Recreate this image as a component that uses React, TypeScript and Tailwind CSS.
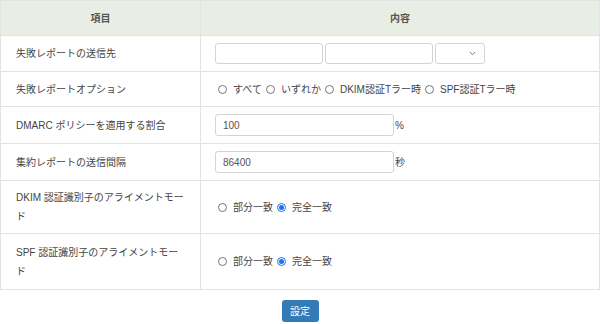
import * as React from "react"

function Radio({ checked }: { checked?: boolean }) {
  return checked ? (
    <span className="inline-flex h-[9px] w-[9px] shrink-0 items-center justify-center rounded-full border border-[#1a73e8] bg-white">
      <span className="h-[5px] w-[5px] rounded-full bg-[#1a73e8]" />
    </span>
  ) : (
    <span className="inline-block h-[9px] w-[9px] shrink-0 rounded-full border border-[#767676] bg-white" />
  )
}

function RadioGroup({ items, selected }: { items: string[]; selected?: number }) {
  return (
    <div className="flex items-center">
      {items.map((label, i) => (
        <label key={label} className="ml-[3px] mr-[1px] flex items-center gap-[6px]">
          <Radio checked={selected === i} />
          <span>{label}</span>
        </label>
      ))}
    </div>
  )
}

function TextBox({ value, className }: { value?: string; className: string }) {
  return (
    <div
      className={
        "flex items-center rounded-[3px] border border-[#d4d4d4] bg-white px-[7px] text-[#555] " +
        className
      }
    >
      {value}
    </div>
  )
}

const rows = [
  {
    label: "失敗レポートの送信先",
    h: "h-[36px]",
    content: (
      <div className="flex items-center gap-[2px]">
        <TextBox className="h-[21px] w-[108px]" />
        <TextBox className="h-[21px] w-[108px]" />
        <div className="flex h-[21px] w-[50px] items-center justify-end rounded-[3px] border border-[#d4d4d4] pr-[8px]">
          <svg width="7" height="5" viewBox="0 0 7 5" fill="none">
            <path d="M0.8 1 L3.5 3.7 L6.2 1" stroke="#777" strokeWidth="1" />
          </svg>
        </div>
      </div>
    ),
  },
  {
    label: "失敗レポートオプション",
    h: "h-[35px]",
    content: (
      <RadioGroup items={["すべて", "いずれか", "DKIM認証Tラー時", "SPF認証Tラー時"]} />
    ),
  },
  {
    label: "DMARC ポリシーを適用する割合",
    h: "h-[37px]",
    content: (
      <div className="flex items-center">
        <TextBox value="100" className="h-[22px] w-[179px]" />
        <span className="ml-[1px]">%</span>
      </div>
    ),
  },
  {
    label: "集約レポートの送信間隔",
    h: "h-[37px]",
    content: (
      <div className="flex items-center">
        <TextBox value="86400" className="h-[22px] w-[179px]" />
        <span className="ml-[1px]">秒</span>
      </div>
    ),
  },
  {
    label: "DKIM 認証識別子のアライメントモード",
    h: "h-[53px]",
    content: <RadioGroup items={["部分一致", "完全一致"]} selected={1} />,
  },
  {
    label: "SPF 認証識別子のアライメントモード",
    h: "h-[56px]",
    content: <RadioGroup items={["部分一致", "完全一致"]} selected={1} />,
  },
]

export default function App() {
  return (
    <div
      className="w-[600px] bg-white text-[10px] leading-[19px] text-[#444]"
      style={{ fontFamily: '"Liberation Sans", "Noto Sans CJK JP", sans-serif' }}
    >
      <table className="w-full table-fixed border-collapse border border-[#e3e3e3]">
        <thead>
          <tr className="h-[35px] bg-[#e9eee4]">
            <th className="w-[200px] border border-[#e3e3e3] font-bold text-[#555]">項目</th>
            <th className="border border-[#e3e3e3] font-bold text-[#555]">内容</th>
          </tr>
        </thead>
        <tbody>
          {rows.map((r) => (
            <tr key={r.label} className={r.h}>
              <td className="border border-[#e3e3e3] pl-[15px] pr-[14px] align-middle">{r.label}</td>
              <td className="border border-[#e3e3e3] pl-[14px] align-middle">{r.content}</td>
            </tr>
          ))}
        </tbody>
      </table>
      <div className="flex justify-center pt-[10px] pb-[3px]">
        <button className="h-[22px] w-[37px] rounded-[3px] bg-[#337ab7] text-[10px] text-white">設定</button>
      </div>
    </div>
  )
}
